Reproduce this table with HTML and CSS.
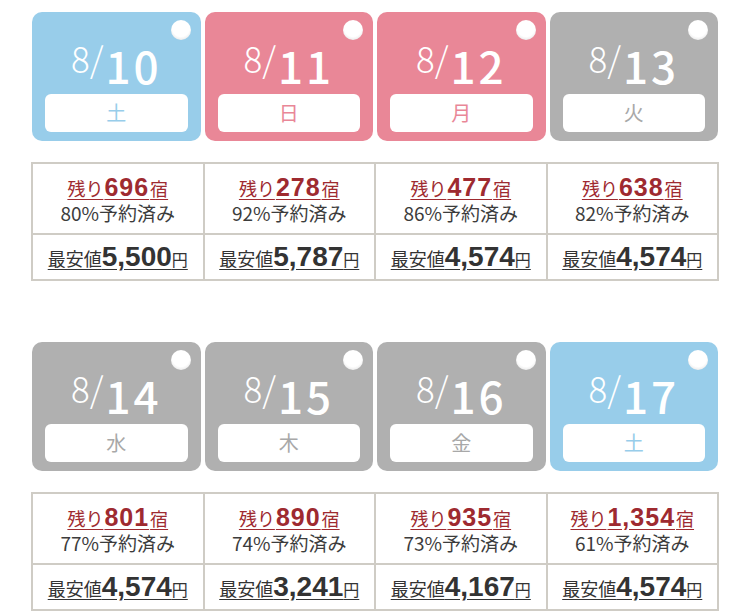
FILE: index.html
```html
<!DOCTYPE html>
<html lang="ja">
<head>
    <meta charset="UTF-8">
    <meta name="viewport" content="width=device-width, initial-scale=1.0">
    <title>空室カレンダー</title>
    <link rel="stylesheet" href="styles.css">
</head>
<body>
    <div class="calendar">
        <!-- 1週目 -->
        <section class="week">
            <div class="days">
                <div class="day sat">
                    <span class="hole"></span>
                    <div class="date"><span class="month">8/</span><span class="num">10</span></div>
                    <div class="dow">土</div>
                </div>
                <div class="day hol">
                    <span class="hole"></span>
                    <div class="date"><span class="month">8/</span><span class="num">11</span></div>
                    <div class="dow">日</div>
                </div>
                <div class="day hol">
                    <span class="hole"></span>
                    <div class="date"><span class="month">8/</span><span class="num">12</span></div>
                    <div class="dow">月</div>
                </div>
                <div class="day weekday">
                    <span class="hole"></span>
                    <div class="date"><span class="month">8/</span><span class="num">13</span></div>
                    <div class="dow">火</div>
                </div>
            </div>
            <table class="stock">
                <tr class="rooms">
                    <td><a href="#" class="left">残り<b>696</b>宿</a><span class="rate">80%予約済み</span></td>
                    <td><a href="#" class="left">残り<b>278</b>宿</a><span class="rate">92%予約済み</span></td>
                    <td><a href="#" class="left">残り<b>477</b>宿</a><span class="rate">86%予約済み</span></td>
                    <td><a href="#" class="left">残り<b>638</b>宿</a><span class="rate">82%予約済み</span></td>
                </tr>
                <tr class="prices">
                    <td><a href="#" class="price">最安値<b>5,500</b><small>円</small></a></td>
                    <td><a href="#" class="price">最安値<b>5,787</b><small>円</small></a></td>
                    <td><a href="#" class="price">最安値<b>4,574</b><small>円</small></a></td>
                    <td><a href="#" class="price">最安値<b>4,574</b><small>円</small></a></td>
                </tr>
            </table>
        </section>

        <!-- 2週目 -->
        <section class="week">
            <div class="days">
                <div class="day weekday">
                    <span class="hole"></span>
                    <div class="date"><span class="month">8/</span><span class="num">14</span></div>
                    <div class="dow">水</div>
                </div>
                <div class="day weekday">
                    <span class="hole"></span>
                    <div class="date"><span class="month">8/</span><span class="num">15</span></div>
                    <div class="dow">木</div>
                </div>
                <div class="day weekday">
                    <span class="hole"></span>
                    <div class="date"><span class="month">8/</span><span class="num">16</span></div>
                    <div class="dow">金</div>
                </div>
                <div class="day sat">
                    <span class="hole"></span>
                    <div class="date"><span class="month">8/</span><span class="num">17</span></div>
                    <div class="dow">土</div>
                </div>
            </div>
            <table class="stock">
                <tr class="rooms">
                    <td><a href="#" class="left">残り<b>801</b>宿</a><span class="rate">77%予約済み</span></td>
                    <td><a href="#" class="left">残り<b>890</b>宿</a><span class="rate">74%予約済み</span></td>
                    <td><a href="#" class="left">残り<b>935</b>宿</a><span class="rate">73%予約済み</span></td>
                    <td><a href="#" class="left">残り<b>1,354</b>宿</a><span class="rate">61%予約済み</span></td>
                </tr>
                <tr class="prices">
                    <td><a href="#" class="price">最安値<b>4,574</b><small>円</small></a></td>
                    <td><a href="#" class="price">最安値<b>3,241</b><small>円</small></a></td>
                    <td><a href="#" class="price">最安値<b>4,167</b><small>円</small></a></td>
                    <td><a href="#" class="price">最安値<b>4,574</b><small>円</small></a></td>
                </tr>
            </table>
        </section>
    </div>
</body>
</html>
```

FILE: styles.css
```css
body {
    margin: 0;
    background-color: #fff;
    font-family: "Noto Sans CJK JP", "Noto Sans", sans-serif;
}

.calendar {
    width: 688px;
    padding: 12px 0 0 31px;
}

.week {
    margin-bottom: 61px;
}

.days {
    display: flex;
    gap: 4px;
    padding: 0 1px;
}

.day {
    flex: 1;
    position: relative;
    height: 129px;
    padding: 0 13px 9px;
    border-radius: 10px;
    box-sizing: border-box;
    display: flex;
    flex-direction: column;
    justify-content: flex-end;
    color: #fff;
}

.sat { background-color: #98cdea; }
.hol { background-color: #e98797; }
.weekday { background-color: #b0b0b0; }

.hole {
    position: absolute;
    top: 8px;
    right: 10px;
    width: 20px;
    height: 20px;
    border-radius: 50%;
    background: radial-gradient(circle at 50% 40%, #fff 55%, #e4e4e4 85%, #c8c8c8 100%);
}

.date {
    text-align: center;
    height: 42px;
    line-height: 42px;
    margin-bottom: 15px;
}

.date .month {
    font-size: 35px;
    font-weight: 300;
    vertical-align: 11px;
    margin-right: 2px;
}

.date .num {
    font-size: 44px;
    font-weight: 500;
    letter-spacing: 3px;
}

.dow {
    height: 38px;
    line-height: 38px;
    background-color: #fff;
    border-radius: 6px;
    text-align: center;
    font-size: 20px;
}

.sat .dow { color: #98cdea; }
.hol .dow { color: #e98797; }
.weekday .dow { color: #a8a8a8; }

.stock {
    width: 688px;
    margin-top: 21px;
    border-collapse: collapse;
    table-layout: fixed;
    background-color: #fff;
}

.stock td {
    border: 2px solid #cfccc5;
    text-align: center;
    vertical-align: middle;
    padding: 0;
}

.rooms td {
    height: 69px;
}

.prices td {
    height: 44px;
}

.left {
    display: inline-block;
    color: #9e2a30;
    font-size: 18px;
    line-height: 22px;
    text-decoration: underline;
    text-underline-offset: 3px;
    margin-top: 2px;
}

.left b {
    font-family: "Liberation Sans", Arial, sans-serif;
    font-size: 25px;
    letter-spacing: 1px;
    margin: 0 1px;
}

.rate {
    display: block;
    color: #3c3c3c;
    font-size: 19px;
    line-height: 23px;
}

.price {
    color: #333;
    font-size: 18px;
    text-decoration: underline;
    text-underline-offset: 3px;
}

.price b {
    font-family: "Liberation Sans", Arial, sans-serif;
    font-size: 28px;
}

.price small {
    font-size: 16px;
}
```
